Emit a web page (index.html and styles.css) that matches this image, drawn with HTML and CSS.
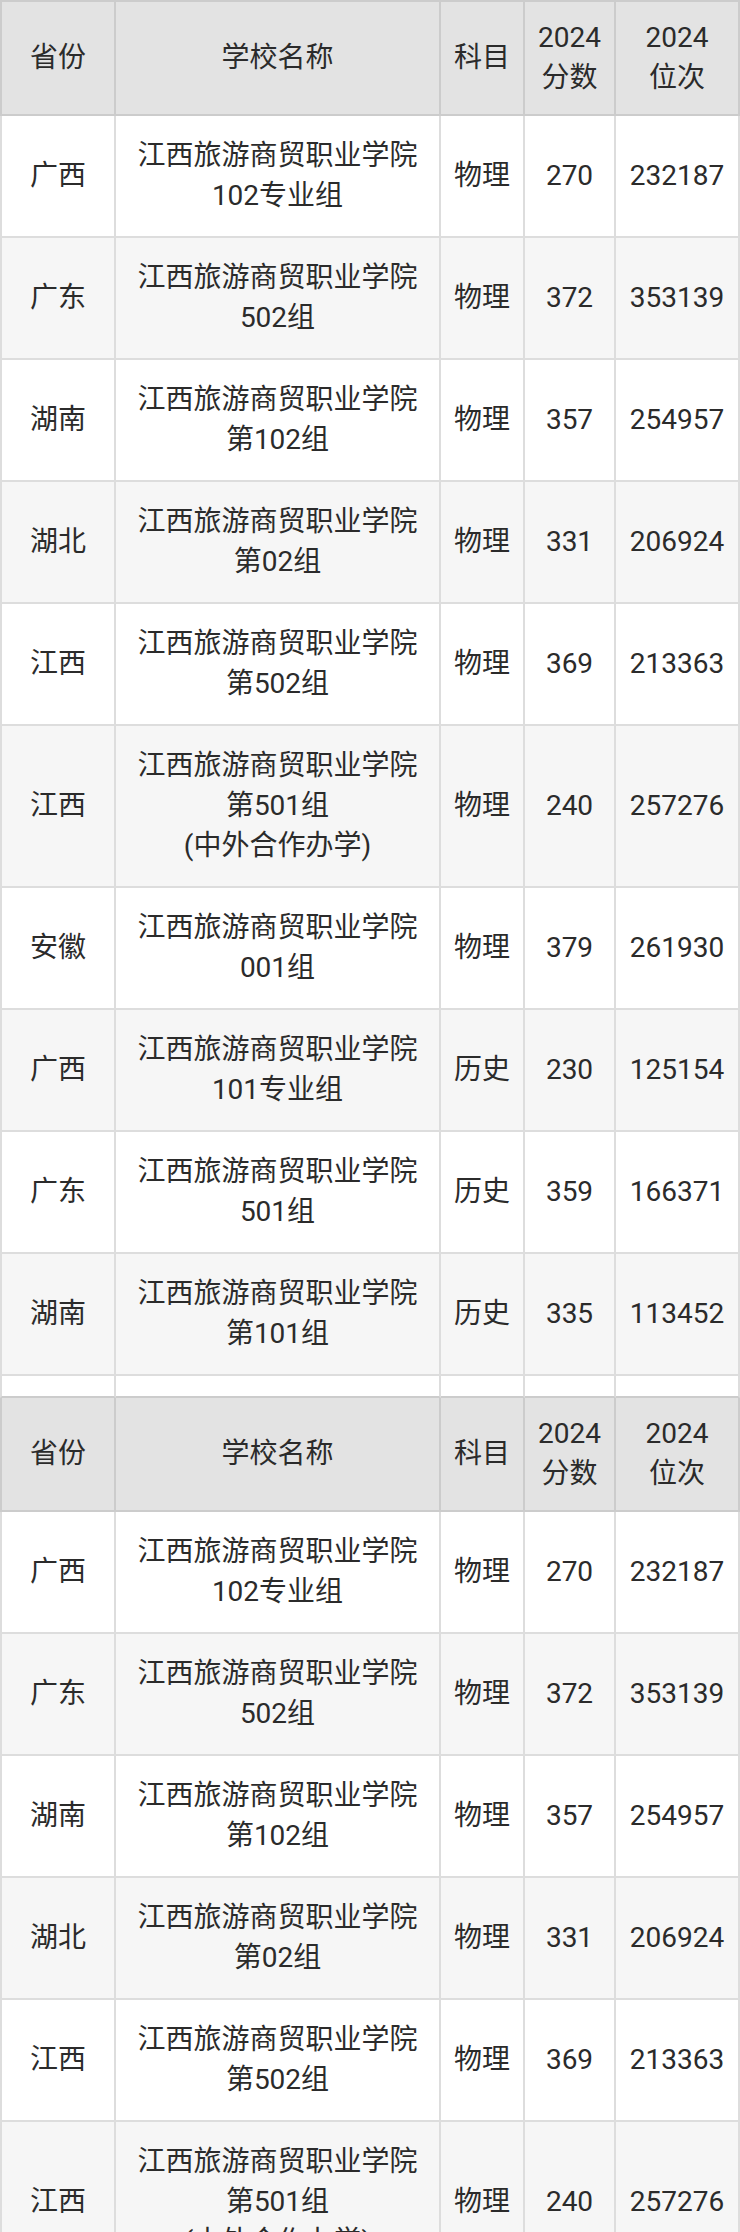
FILE: index.html
```html
<!DOCTYPE html>
<html lang="zh-CN">
<head>
<meta charset="utf-8">
<title>江西旅游商贸职业学院 2024 分数线</title>
<link rel="stylesheet" href="styles.css">
</head>
<body>
<div class="sheet">
  <div class="row head">
    <div class="cell">省份</div>
    <div class="cell">学校名称</div>
    <div class="cell">科目</div>
    <div class="cell">2024<br>分数</div>
    <div class="cell">2024<br>位次</div>
  </div>
  <div class="row"><div class="cell">广西</div><div class="cell">江西旅游商贸职业学院<br>102专业组</div><div class="cell">物理</div><div class="cell">270</div><div class="cell">232187</div></div>
  <div class="row"><div class="cell">广东</div><div class="cell">江西旅游商贸职业学院<br>502组</div><div class="cell">物理</div><div class="cell">372</div><div class="cell">353139</div></div>
  <div class="row"><div class="cell">湖南</div><div class="cell">江西旅游商贸职业学院<br>第102组</div><div class="cell">物理</div><div class="cell">357</div><div class="cell">254957</div></div>
  <div class="row"><div class="cell">湖北</div><div class="cell">江西旅游商贸职业学院<br>第02组</div><div class="cell">物理</div><div class="cell">331</div><div class="cell">206924</div></div>
  <div class="row"><div class="cell">江西</div><div class="cell">江西旅游商贸职业学院<br>第502组</div><div class="cell">物理</div><div class="cell">369</div><div class="cell">213363</div></div>
  <div class="row"><div class="cell">江西</div><div class="cell">江西旅游商贸职业学院<br>第501组<br>(中外合作办学)</div><div class="cell">物理</div><div class="cell">240</div><div class="cell">257276</div></div>
  <div class="row"><div class="cell">安徽</div><div class="cell">江西旅游商贸职业学院<br>001组</div><div class="cell">物理</div><div class="cell">379</div><div class="cell">261930</div></div>
  <div class="row"><div class="cell">广西</div><div class="cell">江西旅游商贸职业学院<br>101专业组</div><div class="cell">历史</div><div class="cell">230</div><div class="cell">125154</div></div>
  <div class="row"><div class="cell">广东</div><div class="cell">江西旅游商贸职业学院<br>501组</div><div class="cell">历史</div><div class="cell">359</div><div class="cell">166371</div></div>
  <div class="row"><div class="cell">湖南</div><div class="cell">江西旅游商贸职业学院<br>第101组</div><div class="cell">历史</div><div class="cell">335</div><div class="cell">113452</div></div>
  <div class="row blank"><div class="cell"></div><div class="cell"></div><div class="cell"></div><div class="cell"></div><div class="cell"></div></div>
</div>
<div class="sheet second">
  <div class="row head">
    <div class="cell">省份</div>
    <div class="cell">学校名称</div>
    <div class="cell">科目</div>
    <div class="cell">2024<br>分数</div>
    <div class="cell">2024<br>位次</div>
  </div>
  <div class="row"><div class="cell">广西</div><div class="cell">江西旅游商贸职业学院<br>102专业组</div><div class="cell">物理</div><div class="cell">270</div><div class="cell">232187</div></div>
  <div class="row"><div class="cell">广东</div><div class="cell">江西旅游商贸职业学院<br>502组</div><div class="cell">物理</div><div class="cell">372</div><div class="cell">353139</div></div>
  <div class="row"><div class="cell">湖南</div><div class="cell">江西旅游商贸职业学院<br>第102组</div><div class="cell">物理</div><div class="cell">357</div><div class="cell">254957</div></div>
  <div class="row"><div class="cell">湖北</div><div class="cell">江西旅游商贸职业学院<br>第02组</div><div class="cell">物理</div><div class="cell">331</div><div class="cell">206924</div></div>
  <div class="row"><div class="cell">江西</div><div class="cell">江西旅游商贸职业学院<br>第502组</div><div class="cell">物理</div><div class="cell">369</div><div class="cell">213363</div></div>
  <div class="row"><div class="cell">江西</div><div class="cell">江西旅游商贸职业学院<br>第501组<br>(中外合作办学)</div><div class="cell">物理</div><div class="cell">240</div><div class="cell">257276</div></div>
</div>
</body>
</html>
```

FILE: styles.css
```css
html, body {
  margin: 0;
  padding: 0;
  background: #ffffff;
  overflow: hidden;
}

body {
  width: 740px;
  font-family: Roboto, "Noto Sans CJK SC", sans-serif;
  font-size: 28px;
  line-height: 40px;
  color: #2b2b2b;
}

.sheet {
  display: flex;
  flex-direction: column;
}

.row {
  display: grid;
  grid-template-columns: 116px 325px 84px 91px 124px;
}

.row:nth-child(odd) {
  background: #f6f6f6;
}

.row:nth-child(even) {
  background: #ffffff;
}

.cell {
  box-sizing: border-box;
  display: flex;
  align-items: center;
  justify-content: center;
  text-align: center;
  padding: 20px 0;
  border-right: 2px solid #dddddd;
  border-bottom: 2px solid #dddddd;
}

.cell:first-child {
  border-left: 2px solid #dddddd;
}

.row.head {
  background: #e3e3e3;
}

.row.head .cell {
  padding: 16px 0;
  border-color: #cccccc;
}

.sheet:first-child .row.head .cell {
  border-top: 2px solid #cccccc;
}

.row.blank {
  background: #ffffff;
}

.row.blank .cell {
  padding: 0;
  height: 22px;
  border-bottom-color: #cccccc;
}
```
